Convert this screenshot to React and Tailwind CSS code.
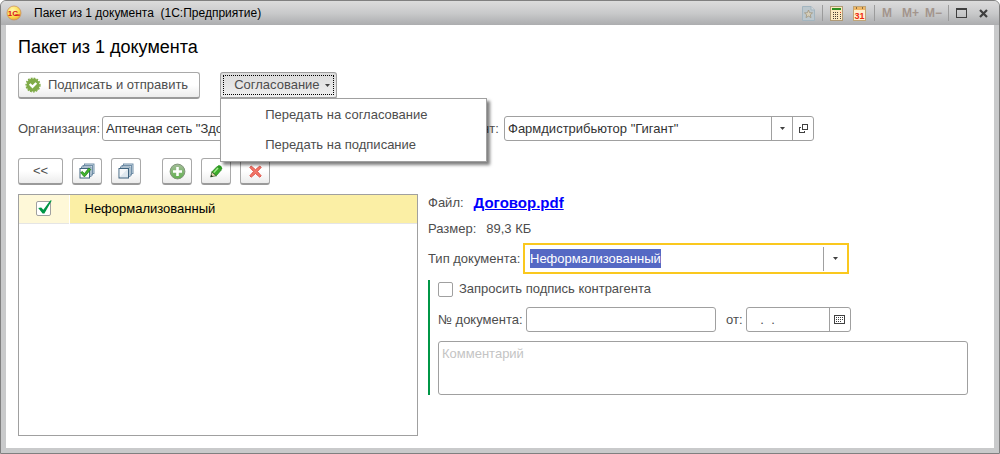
import React, { useState, useEffect, useRef } from 'react';

const MENU_ITEMS = ['Передать на согласование', 'Передать на подписание'];

const BUTTON =
  'h-[27px] rounded-[3px] border border-[#a9a9a9] border-b-2 border-b-[#9a9a9a] bg-gradient-to-b from-white from-50% to-[#ececec] flex items-center justify-center';
const FIELD = 'h-[25px] flex items-stretch rounded-[3px] border border-[#a0a0a0] bg-white overflow-hidden';

// --- Icons ---
const LogoIcon = () => (
  <svg width="16" height="16" viewBox="0 0 16 16" aria-hidden="true">
    <defs>
      <radialGradient id="logo" cx="0.4" cy="0.3" r="0.8">
        <stop offset="0" stopColor="#fff7b0" />
        <stop offset="0.6" stopColor="#fbdc4c" />
        <stop offset="1" stopColor="#e79a2c" />
      </radialGradient>
    </defs>
    <circle cx="8" cy="8" r="7" fill="url(#logo)" stroke="#c98a5a" strokeWidth="0.7" />
    <text x="1.8" y="10.8" fontSize="8" fontWeight="bold" fontFamily="Liberation Sans, Arial, sans-serif" fill="#d8161c">1С</text>
    <path d="M9 10.2 H13.8" stroke="#d8161c" strokeWidth="1.3" />
  </svg>
);

const StarPageIcon = () => (
  <svg width="13" height="15" viewBox="0 0 13 15" aria-hidden="true">
    <path d="M0.5 0.5 H9 L12.5 4 V14.5 H0.5 Z" fill="#bcc7cd" stroke="#a3b5bf" />
    <path d="M9 0.5 V4 H12.5" fill="#d2d8dc" stroke="#a3b5bf" />
    <path d="M6.5 4 L7.6 6.7 L10.5 6.9 L8.3 8.8 L9 11.6 L6.5 10.1 L4 11.6 L4.7 8.8 L2.5 6.9 L5.4 6.7 Z" fill="#d6cfba" stroke="#a0967f" strokeWidth="0.8" />
  </svg>
);

const CalcIcon = () => (
  <svg width="13" height="15" viewBox="0 0 13 15" shapeRendering="crispEdges" aria-hidden="true">
    <rect x="0.5" y="0.5" width="12" height="14" fill="#fde9c0" stroke="#b09a76" />
    <rect x="2" y="2" width="9" height="2" fill="#2f8f22" />
    {[6, 8, 10, 12].map((y) => (
      <g key={y}>
        <rect x="3" y={y} width="1" height="1" fill="#4d4034" />
        <rect x="5" y={y} width="1" height="1" fill="#4d4034" />
        <rect x="7" y={y} width="1" height="1" fill="#4d4034" />
        <rect x="10" y={y} width="1" height="1" fill={y < 8 ? '#e03c20' : '#4d4034'} />
      </g>
    ))}
  </svg>
);

const CalendarIcon = () => (
  <svg width="13" height="15" viewBox="0 0 13 15" aria-hidden="true">
    <rect x="0.5" y="0.5" width="12" height="14" fill="#fff0d0" stroke="#c0a578" />
    <rect x="1" y="1" width="11" height="3" fill="#efb867" />
    <rect x="3" y="1" width="1" height="2" fill="#8c6a3c" />
    <rect x="9" y="1" width="1" height="2" fill="#8c6a3c" />
    <text x="6.5" y="13" textAnchor="middle" fontSize="9" fontFamily="Liberation Sans, Arial, sans-serif" fill="#ee2a10">31</text>
  </svg>
);

const SealIcon = () => (
  <svg width="16" height="16" viewBox="0 0 16 16" aria-hidden="true">
    <circle cx="8" cy="8" r="6.6" fill="#7fab48" />
    <circle cx="8" cy="8" r="6.9" fill="none" stroke="#7fab48" strokeWidth="1.4" strokeDasharray="1.8 1.2" />
    <path d="M4.7 7 L7.5 9.8 L11.3 6" fill="none" stroke="#fff" strokeWidth="2.4" />
  </svg>
);

const StackIcon = ({ checked }) => (
  <svg width="16" height="16" viewBox="0 0 16 16" aria-hidden="true">
    <rect x="5.5" y="1" width="9.5" height="9.5" fill="#dde8ef" stroke="#6585a0" strokeWidth="0.9" />
    <rect x="4" y="2.5" width="9.5" height="9.5" fill="#e9f0f5" stroke="#6585a0" strokeWidth="0.9" />
    <rect x="2.5" y="4" width="9.5" height="9.5" fill="#e9f0f5" stroke="#6585a0" strokeWidth="0.9" />
    <rect x="1" y="5.5" width="9.5" height="9.5" fill={checked ? '#fff' : '#dfe8ef'} stroke="#3f637f" />
    {checked ? (
      <path d="M1.6 9.6 L3.4 8.4 L5.4 10.6 L9.8 5 L11.8 6.4 L6 13.4 L4.8 13.4 Z" fill="#43b42e" stroke="#1c7d17" strokeWidth="0.7" />
    ) : (
      <path d="M1.6 14 V6 H9.6 Z" fill="#fff" opacity="0.7" />
    )}
  </svg>
);

const AddIcon = () => (
  <svg width="17" height="17" viewBox="0 0 17 17" aria-hidden="true">
    <defs>
      <linearGradient id="add" x1="0" y1="0" x2="0" y2="1">
        <stop offset="0" stopColor="#a3bd98" />
        <stop offset="1" stopColor="#62b050" />
      </linearGradient>
    </defs>
    <circle cx="8.5" cy="8.5" r="7.4" fill="url(#add)" stroke="#82957c" />
    <path d="M8.5 4 V13 M4 8.5 H13" stroke="#fff" strokeWidth="2.6" />
  </svg>
);

const PencilIcon = () => (
  <svg width="14" height="14" viewBox="0 0 14 14" aria-hidden="true">
    <path d="M8.2 2.4 L12.4 5.8 L7.2 11.8 L2.8 8 Z" fill="#3dae2a" stroke="#1d7f16" strokeWidth="0.8" />
    <path d="M9 4 L4.8 8.6" stroke="#a5e88e" strokeWidth="1.4" />
    <path d="M2.8 8 L7.2 11.8 L1.8 12.8 Z" fill="#e6d3ae" stroke="#2f5a24" strokeWidth="0.7" />
    <path d="M1.4 13.2 L2.2 10.8 L4 12.4 Z" fill="#1d3a18" />
    <path d="M8.2 2.4 L9.8 1 Q12.6 1.4 13.4 4.4 L12.4 5.8 Z" fill="#2b9a20" />
  </svg>
);

const DeleteIcon = () => (
  <svg width="13" height="13" viewBox="0 0 13 13" aria-hidden="true">
    <path d="M2.2 1 L6.5 4.7 L10.8 1 L12.2 2.4 L8.4 6.5 L12.2 10.8 L10.8 12.2 L6.5 8.5 L2.2 12.2 L0.8 10.8 L4.6 6.5 L0.8 2.4 Z" fill="#f2786a" stroke="#dd4a40" strokeWidth="0.9" />
  </svg>
);

const ArrowIcon = () => (
  <svg width="5" height="3" viewBox="0 0 5 3" aria-hidden="true">
    <path d="M0 0 H5 L2.5 3 Z" fill="#404040" />
  </svg>
);

const OpenIcon = () => (
  <svg width="9" height="9" viewBox="0 0 9 9" shapeRendering="crispEdges" aria-hidden="true">
    <path d="M3.5 0.5 H8.5 V5.5 H3.5 Z M2 3.5 H0.5 V8.5 H5.5 V7" fill="none" stroke="#404040" />
  </svg>
);

const DateIcon = () => (
  <svg width="11" height="9" viewBox="0 0 11 9" shapeRendering="crispEdges" aria-hidden="true">
    <path d="M0.5 0.5 H10.5 V8.5 H0.5 Z" fill="none" stroke="#404040" />
    <path d="M2 2.5 H9 M2 4.5 H9 M2 6.5 H7" stroke="#404040" strokeDasharray="1 1" />
  </svg>
);

const Separator = () => <span className="w-px h-4 bg-[#9b9b9b]" />;

// --- Window parts ---
const TitleBar = () => (
  <header className="h-6 flex items-center pl-[5px] pr-[11px] bg-gradient-to-b from-[#dcdcdc] via-[#c9cacb] to-[#acadaf]">
    <LogoIcon />
    <span className="ml-3 text-[12px] text-black whitespace-pre">Пакет из 1 документа  (1С:Предприятие)</span>
    <div className="ml-auto flex items-center text-[12px] font-bold text-[#a3958d]">
      <button aria-label="В избранное" className="mr-[7px]"><StarPageIcon /></button>
      <Separator />
      <button aria-label="Калькулятор" className="ml-[7px]"><CalcIcon /></button>
      <button aria-label="Календарь" className="ml-[10px] mr-2"><CalendarIcon /></button>
      <Separator />
      <button className="ml-[7px]">M</button>
      <button className="ml-[10px]">M+</button>
      <button className="ml-[6px] mr-[6px]">M−</button>
      <Separator />
      <button aria-label="Развернуть" className="ml-[7px]">
        <svg width="11" height="10" viewBox="0 0 11 10" shapeRendering="crispEdges" aria-hidden="true">
          <path d="M0.5 0.5 H10.5 V9.5 H0.5 Z M0 1.5 H11" fill="none" stroke="#3f3f3f" />
        </svg>
      </button>
      <button aria-label="Закрыть" className="ml-3">
        <svg width="9" height="9" viewBox="0 0 9 9" aria-hidden="true">
          <path d="M1 1 L8 8 M8 1 L1 8" stroke="#3f3f3f" strokeWidth="2.2" />
        </svg>
      </button>
    </div>
  </header>
);

const ApprovalMenu = () => {
  const [open, setOpen] = useState(true);
  return (
    <div className="relative">
      <button
        aria-haspopup="menu"
        aria-expanded={open}
        onClick={() => setOpen(!open)}
        className="h-[27px] p-[2px] rounded-[3px] border border-[#a0a0a0] border-b-2 bg-gradient-to-b from-[#dcdcdc] to-[#efefef]"
      >
        <span className="h-full flex items-center gap-[5px] pl-[10px] pr-[3px] border border-dotted border-black">
          Согласование <ArrowIcon />
        </span>
      </button>
      {open && (
        <div role="menu" className="absolute z-10 left-0 top-[26px] w-[267px] py-px bg-white border border-[#a0a0a0] shadow-[3px_3px_3px_rgba(0,0,0,0.5)]">
          {MENU_ITEMS.map((item) => (
            <button key={item} role="menuitem" className="block w-full h-[30px] pl-11 text-left hover:bg-[#fbefa5]">
              {item}
            </button>
          ))}
        </div>
      )}
    </div>
  );
};

const DocumentList = () => {
  const [checked, setChecked] = useState(true);
  return (
    <div className="border border-[#a0a0a0] bg-white">
      <table className="w-full border-collapse">
        <tbody>
          <tr className="h-7 border-b border-[#e5e5e5] text-black">
            <td className="w-[50px] p-0 bg-[#fef8d8] border-r border-white">
              <span className="relative block w-[15px] h-[15px] mx-auto">
                <input
                  type="checkbox"
                  aria-label="Неформализованный"
                  checked={checked}
                  onChange={(e) => setChecked(e.target.checked)}
                  className="block appearance-none w-[15px] h-[15px] rounded-[2px] border border-[#a0a0a0] bg-white"
                />
                {checked && (
                  <svg className="absolute left-[2px] -top-px pointer-events-none" width="14" height="15" viewBox="0 0 14 15" aria-hidden="true">
                    <path d="M0.2 8 L3.2 7.4 L5.4 9.8 L12.2 0.4 H13.8 L6.4 13.4 H4.6 Z" fill="#009646" />
                  </svg>
                )}
              </span>
            </td>
            <td className="py-0 px-[15px] bg-[#fbefa5]">Неформализованный</td>
          </tr>
        </tbody>
      </table>
    </div>
  );
};

const DocumentDetails = () => {
  const typeRef = useRef(null);

  useEffect(() => {
    typeRef.current.focus();
    typeRef.current.select();
  }, []);

  return (
    <div className="flex flex-col">
      <div className="h-[18px] flex items-center gap-[10px]">
        <span>Файл:</span>
        <a href="#file" className="text-[15px] font-bold text-[#0000ff] underline">Договор.pdf</a>
      </div>
      <div className="h-[18px] mt-2 flex items-center gap-[10px]">
        <span>Размер:</span>
        <span>89,3 КБ</span>
      </div>
      <div className="mt-[5px] flex items-center gap-1">
        <label htmlFor="doc-type" className="w-[91px] whitespace-nowrap">Тип документа:</label>
        <div className="w-[326px] h-[31px] flex items-center border-2 border-[#fac81e] bg-white">
          <input
            id="doc-type"
            ref={typeRef}
            role="combobox"
            aria-expanded="false"
            defaultValue="Неформализованный"
            className="flex-1 min-w-0 px-[5px] text-[#333] outline-none selection:bg-[#5569c4] selection:text-white"
          />
          <button aria-label="Выбрать тип" className="w-6 h-6 flex items-center justify-center border-l border-[#a0a0a0]">
            <ArrowIcon />
          </button>
        </div>
      </div>
      <div className="mt-[6px] pl-2 border-l-2 border-[#009646] flex flex-col gap-[9px]">
        <label className="h-[18px] flex items-center gap-[6px]">
          <input type="checkbox" className="appearance-none w-[15px] h-[15px] rounded-[2px] border border-[#a0a0a0] bg-white checked:bg-[#009646]" />
          Запросить подпись контрагента
        </label>
        <div className="flex items-center">
          <label htmlFor="doc-number" className="w-[88px] whitespace-nowrap">№ документа:</label>
          <input id="doc-number" className="h-[25px] w-[190px] px-1 rounded-[3px] border border-[#a0a0a0] bg-white outline-none" />
          <label htmlFor="doc-date" className="ml-[10px] mr-[3px]">от:</label>
          <div className={`${FIELD} w-[105px]`}>
            <input id="doc-date" defaultValue="   .  ." className="flex-1 min-w-0 px-[3px] outline-none" />
            <button aria-label="Выбрать дату" className="w-[21px] flex items-center justify-center border-l border-[#a0a0a0]">
              <DateIcon />
            </button>
          </div>
        </div>
        <textarea
          aria-label="Комментарий"
          placeholder="Комментарий"
          className="block w-full h-[54px] px-[3px] py-[2px] rounded-[3px] border border-[#a0a0a0] bg-white resize-none outline-none placeholder:text-[#c4c4c4]"
        />
      </div>
    </div>
  );
};

export default function App() {
  return (
    <div className="min-h-screen flex flex-col rounded-t-md border border-[#808080] bg-[#c9cacb] overflow-hidden font-['Liberation_Sans',Arial,sans-serif] text-[13px] text-[#4d4d4d]">
      <TitleBar />
      <main className="flex-1 flex flex-col mx-[5px] mb-[5px] pl-3 pr-[26px] pb-3 bg-white">
        <h1 className="mt-[10px] text-[18px] leading-6 text-black">Пакет из 1 документа</h1>

        <div className="mt-[13px] flex gap-5">
          <button className={`${BUTTON} gap-[7px] pl-[6px] pr-[11px]`}>
            <SealIcon />
            Подписать и отправить
          </button>
          <ApprovalMenu />
        </div>

        <div className="mt-[17px] grid grid-cols-[20fr_27fr] gap-[10px]">
          <div className="flex items-center gap-[2px]">
            <label htmlFor="org">Организация:</label>
            <div className={`${FIELD} flex-1`}>
              <input id="org" defaultValue={'Аптечная сеть "Здоровье"'} className="flex-1 min-w-0 px-[3px] text-[#333] outline-none" />
            </div>
          </div>
          <div className="flex items-center gap-1">
            <label htmlFor="partner" className="w-[72px]">Контрагент:</label>
            <div className={`${FIELD} w-[310px]`}>
              <input id="partner" role="combobox" aria-expanded="false" defaultValue={'Фармдистрибьютор "Гигант"'} className="flex-1 min-w-0 px-[3px] text-[#333] outline-none" />
              <button aria-label="Выбрать" className="w-[21px] flex items-center justify-center border-l border-[#a0a0a0]"><ArrowIcon /></button>
              <button aria-label="Открыть" className="w-[21px] flex items-center justify-center border-l border-[#a0a0a0]"><OpenIcon /></button>
            </div>
          </div>
        </div>

        <div className="mt-[17px] flex gap-[9px]">
          <button className={`${BUTTON} w-[45px]`}>&lt;&lt;</button>
          <button aria-label="Отметить все" className={`${BUTTON} w-[30px]`}><StackIcon checked /></button>
          <button aria-label="Снять отметки" className={`${BUTTON} w-[30px] mr-3`}><StackIcon /></button>
          <button aria-label="Добавить" className={`${BUTTON} w-[30px]`}><AddIcon /></button>
          <button aria-label="Изменить" className={`${BUTTON} w-[30px]`}><PencilIcon /></button>
          <button aria-label="Удалить" className={`${BUTTON} w-[30px]`}><DeleteIcon /></button>
        </div>

        <div className="mt-[9px] flex-1 grid grid-cols-[20fr_27fr] gap-[10px]">
          <DocumentList />
          <DocumentDetails />
        </div>
      </main>
    </div>
  );
}
